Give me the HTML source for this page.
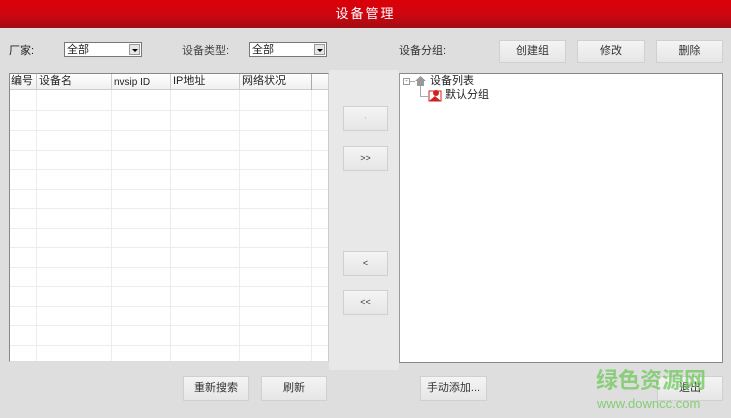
<!DOCTYPE html>
<html><head><meta charset="utf-8"><style>
*{margin:0;padding:0;box-sizing:border-box}
body{width:731px;height:418px;overflow:hidden;background:#dedede;font-family:"Liberation Sans","Noto Sans CJK SC",sans-serif;font-size:11px;line-height:13px;color:#222;position:relative}
.a{position:absolute}
.title{left:0;top:0;width:731px;height:28px;background:linear-gradient(#dc0008,#cc0610 55%,#a00c12);color:#fff;font-size:13px;text-align:center;line-height:28px;letter-spacing:2px}
.btn{position:absolute;background:linear-gradient(#f4f4f4,#e6e6e6);border:1px solid #d0d0d0;text-align:center;font-size:11px;color:#333}
.sel{position:absolute;height:15px;background:#fff;border:1px solid #777;font-size:11px;line-height:14px;padding-left:2px}
.sel i{position:absolute;right:1px;top:1px;width:11px;height:11px;background:#e6e6e6;border:1px solid #999}
.sel i:after{content:"";position:absolute;left:2px;top:4px;border:3px solid transparent;border-top:3px solid #000}
.tbl{left:9px;top:73px;width:320px;height:289px;background:#fff;border:1px solid #888;border-right-color:#ccc;border-bottom-color:#ddd;overflow:hidden}
.v{position:absolute;top:0;width:1px;height:289px;background:#ececec}
.h{position:absolute;left:0;width:320px;height:1px;background:#ececec}
</style></head><body>
<div class="a title">设备管理</div>
<div class="a" style="left:9px;top:45px">厂家:</div>
<div class="sel" style="left:64px;top:42px;width:78px">全部<i></i></div>
<div class="a" style="left:182px;top:45px;color:#444">设备类型:</div>
<div class="sel" style="left:249px;top:42px;width:78px">全部<i></i></div>
<div class="a" style="left:399px;top:45px;color:#333">设备分组:</div>
<div class="btn" style="left:499px;top:40px;width:67px;height:23px;line-height:21px">创建组</div>
<div class="btn" style="left:577px;top:40px;width:68px;height:23px;line-height:21px">修改</div>
<div class="btn" style="left:656px;top:40px;width:67px;height:23px;line-height:21px">删除</div>
<div class="a tbl">
<div style="position:absolute;left:0;top:0;width:320px;height:16px;background:linear-gradient(#fff,#f0f0f0);border-bottom:1px solid #ccc"></div>
<div class="v" style="left:26px;background:#ccc;height:16px"></div><div class="v" style="left:26px;top:16px"></div>
<div class="v" style="left:101px;background:#ccc;height:16px"></div><div class="v" style="left:101px;top:16px"></div>
<div class="v" style="left:160px;background:#ccc;height:16px"></div><div class="v" style="left:160px;top:16px"></div>
<div class="v" style="left:229px;background:#ccc;height:16px"></div><div class="v" style="left:229px;top:16px"></div>
<div class="v" style="left:301px;background:#aaa;height:16px"></div><div class="v" style="left:301px;top:16px"></div>
<div class="a" style="left:1px;top:1px">编号</div>
<div class="a" style="left:29px;top:1px">设备名</div>
<div class="a" style="left:104px;top:2px;font-size:10px">nvsip ID</div>
<div class="a" style="left:163px;top:1px">IP地址</div>
<div class="a" style="left:232px;top:1px">网络状况</div>
<div class="h" style="top:36px"></div><div class="h" style="top:56px"></div><div class="h" style="top:76px"></div><div class="h" style="top:95px"></div><div class="h" style="top:115px"></div><div class="h" style="top:134px"></div><div class="h" style="top:154px"></div><div class="h" style="top:173px"></div><div class="h" style="top:193px"></div><div class="h" style="top:212px"></div><div class="h" style="top:232px"></div><div class="h" style="top:251px"></div><div class="h" style="top:271px"></div>
</div>
<div class="a" style="left:329px;top:70px;width:70px;height:300px;background:#e8e8e8"></div>
<div class="btn" style="left:343px;top:106px;width:45px;height:25px;line-height:23px;color:#bbb">·</div>
<div class="btn" style="left:343px;top:146px;width:45px;height:25px;line-height:23px;font-size:9px">&gt;&gt;</div>
<div class="btn" style="left:343px;top:251px;width:45px;height:25px;line-height:23px;font-size:9px">&lt;</div>
<div class="btn" style="left:343px;top:290px;width:45px;height:25px;line-height:23px;font-size:9px">&lt;&lt;</div>
<div class="a" style="left:399px;top:73px;width:324px;height:290px;background:#fff;border:1px solid #888;border-left-color:#999"></div>
<div class="a" style="left:403px;top:78px;width:7px;height:7px;border:1px solid #999;font-size:7px;line-height:5px;text-align:center;color:#555">-</div>
<div class="a" style="left:410px;top:81px;width:5px;height:1px;background:#aaa"></div>
<div class="a" style="left:420px;top:86px;width:1px;height:10px;background:#aaa"></div>
<div class="a" style="left:420px;top:96px;width:8px;height:1px;background:#aaa"></div>
<svg class="a" style="left:414px;top:75px" width="13" height="12"><path d="M1 6 L6.5 1 L12 6 L10 6 L10 11 L3 11 L3 6Z" fill="#999"/></svg>
<div class="a" style="left:430px;top:75px">设备列表</div>
<svg class="a" style="left:428px;top:88px" width="14" height="14"><rect x="1" y="3" width="12" height="10" fill="#fff" stroke="#d02020"/><path d="M1 13 L7 8 L13 13Z" fill="#d02020"/><circle cx="8" cy="5" r="3" fill="#d02020"/></svg>
<div class="a" style="left:445px;top:89px">默认分组</div>
<div class="btn" style="left:183px;top:376px;width:66px;height:25px;line-height:23px">重新搜索</div>
<div class="btn" style="left:261px;top:376px;width:66px;height:25px;line-height:23px">刷新</div>
<div class="btn" style="left:420px;top:376px;width:67px;height:25px;line-height:23px">手动添加...</div>
<div class="btn" style="left:657px;top:376px;width:66px;height:25px;line-height:23px">退出</div>
<div class="a" style="left:596px;top:368px;font-size:22px;line-height:26px;color:rgba(110,200,90,.75);font-weight:bold">绿色资源网</div>
<div class="a" style="left:597px;top:397px;font-size:13px;line-height:14px;color:rgba(110,200,90,.8)">www.downcc.com</div>
</body></html>
